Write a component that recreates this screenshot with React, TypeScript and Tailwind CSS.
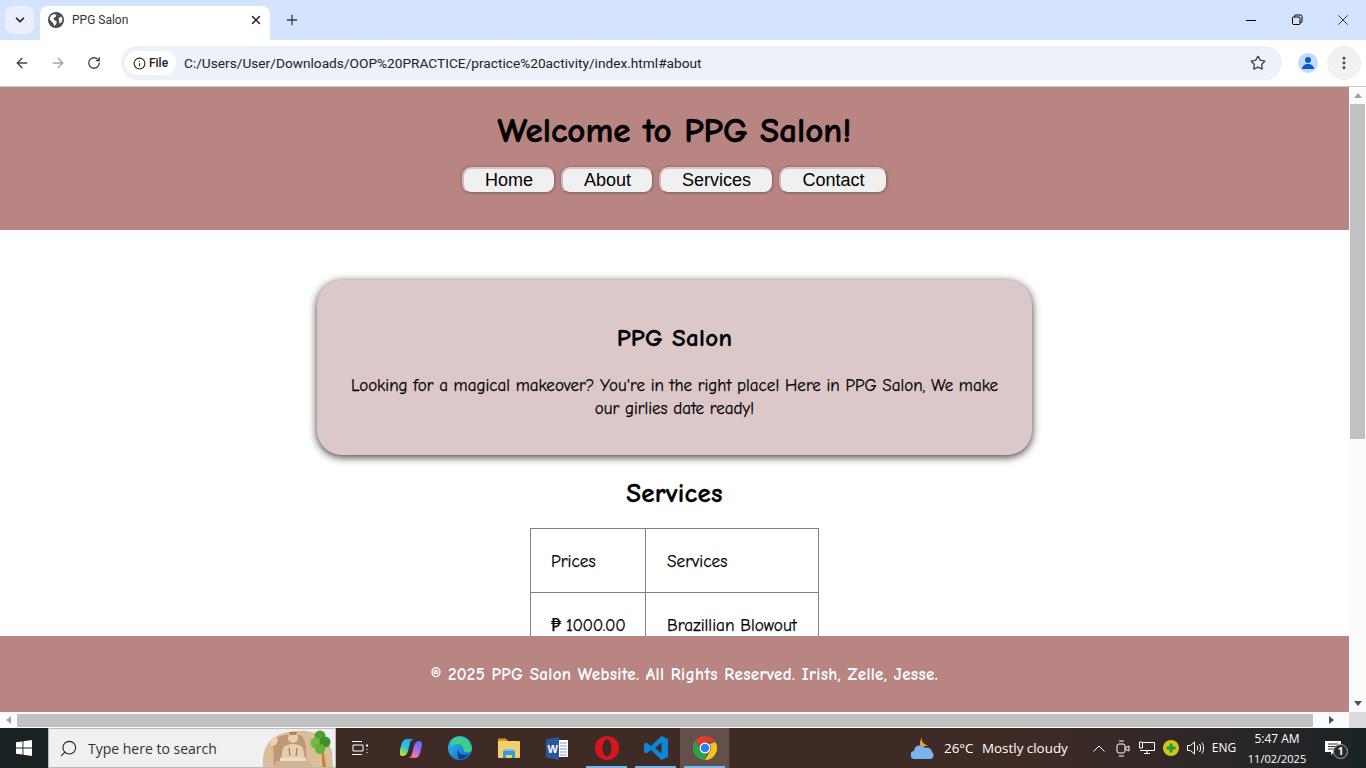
import { ReactNode } from "react";
import { ArrowLeft, ArrowRight, ChevronDown, Info, MoreVertical, Plus, RotateCw, Search, Star, X } from "lucide-react";

const comic = "font-['Comic_Sans_MS','Comic_Neue','Lato',sans-serif]";
const segoe = "font-['Open_Sans',sans-serif]";

function GlobeIcon() {
  return (
    <svg width="16" height="16" viewBox="0 0 16 16">
      <circle cx="8" cy="8" r="8" fill="#474c52" />
      <path d="M3 3.5l3-1.5 2.5 1-1 2-2 1 1 2.5 2 .5v2.5l-2 2.5-1.5-3-2-2-1.5-2zM10.500 6l3-1.500 1 3-1 3-2 1-.5-3z" fill="#fff" />
    </svg>
  );
}

function TabStrip() {
  return (
    <div className="flex h-10 shrink-0 items-end bg-[#d3e3fd] pl-[5px]">
      <div className="mb-[6px] flex h-[28px] w-[29px] items-center justify-center rounded-lg bg-[#e9effb]">
        <ChevronDown size={14} strokeWidth={3} className="text-[#222]" />
      </div>
      <div className="ml-[6px] flex h-[34px] w-[230px] items-center rounded-t-lg bg-white pb-[6px] pl-2 pr-[7px]">
        <GlobeIcon />
        <span className="ml-2 flex-1 font-['Roboto',sans-serif] text-xs text-[#333]">PPG Salon</span>
        <X size={14} strokeWidth={2.5} className="text-[#222]" />
      </div>
      <div className="mb-[12px] ml-[14px] flex items-center">
        <Plus size={16} strokeWidth={2} className="text-[#3c4043]" />
      </div>
      <div className="flex-1" />
      <div className="mb-[11px] flex items-center text-black">
        <div className="flex w-[46px] justify-center">
          <div className="h-px w-[10px] bg-black" />
        </div>
        <div className="flex w-[46px] justify-center">
          <svg width="12" height="12" viewBox="0 0 12 12" fill="none" stroke="#000">
            <rect x="1.500" y="3" width="7.500" height="7.500" rx="1" />
            <path d="M3.500 3V2a1 1 0 011-1h5a1.500 1.500 0 011.500 1.500v5a1 1 0 01-1 1H9" />
          </svg>
        </div>
        <div className="flex w-[46px] justify-center">
          <X size={18} strokeWidth={1} />
        </div>
      </div>
    </div>
  );
}

function Toolbar() {
  return (
    <div className="flex h-[47px] shrink-0 items-center border-b border-[#c9c9c9] bg-white">
      <div className="flex w-[121px] items-center pl-[14px] text-[#444]">
        <ArrowLeft size={16} strokeWidth={2} />
        <ArrowRight size={16} strokeWidth={2} className="ml-5 text-[#a5a5a5]" />
        <RotateCw size={14} strokeWidth={2.2} className="ml-[21px]" />
      </div>
      <div className="flex h-[34px] w-[1161px] items-center rounded-full bg-[#ecf1fa] pl-1 pr-4">
        <div className="flex h-6 w-[51px] items-center justify-center gap-[3px] rounded-full bg-white">
          <Info size={13} strokeWidth={2} className="text-[#222]" />
          <span className="font-['Roboto',sans-serif] text-xs font-medium text-[#222]">File</span>
        </div>
        <span className="ml-2 flex-1 font-['Roboto',sans-serif] text-[13.7px] text-[#222]">
          C:/Users/User/Downloads/OOP%20PRACTICE/practice%20activity/index.html#about
        </span>
        <Star size={16} strokeWidth={2} className="text-[#444]" />
      </div>
      <div className="ml-4 flex h-5 w-5 items-center justify-center overflow-hidden rounded-full bg-[#c2dafb]">
        <svg width="14" height="14" viewBox="0 0 14 14" fill="#0b57d0">
          <circle cx="7" cy="4" r="3" />
          <path d="M1 13c0-3 3-5 6-5s6 2 6 5z" />
        </svg>
      </div>
      <div className="ml-[9px] flex h-[34px] w-[34px] items-center justify-center rounded-full bg-[#f1f1f1]">
        <MoreVertical size={16} strokeWidth={2.4} className="text-[#444]" />
      </div>
    </div>
  );
}

function NavButton({ label, width }: { label: string; width: string }) {
  return (
    <button
      className={`h-[26px] ${width} rounded-[9px] border-t-2 border-r border-b border-l-2 border-t-[#d9c4c4] border-r-[#8d6a6a] border-b-[#8d6a6a] border-l-[#d2b8b8] bg-[#f0f0f0] pb-[2px] font-['Liberation_Sans',sans-serif] text-lg leading-none text-black shadow-[0_0_3px_rgba(90,60,60,0.55)]`}
    >
      {label}
    </button>
  );
}

function Cell({ children, className = "" }: { children: ReactNode; className?: string }) {
  return (
    <td className={`whitespace-nowrap border border-[#808080] pb-[19px] pt-[21px] text-[17.3px] leading-[23px] text-black [-webkit-text-stroke:0.25px_black] ${className}`}>
      {children}
    </td>
  );
}

function Page() {
  return (
    <div className={`flex min-w-0 flex-1 flex-col ${comic}`}>
      <header className="flex h-[143px] shrink-0 flex-col items-center bg-[#b98583] pt-[22px]">
        <h1 className="text-[35px] font-bold leading-[44px] text-black [-webkit-text-stroke:0.5px_black]">Welcome to PPG Salon!</h1>
        <nav className="mt-[14px] flex gap-[6px]">
          <NavButton label="Home" width="w-[93px]" />
          <NavButton label="About" width="w-[92px]" />
          <NavButton label="Services" width="w-[114px]" />
          <NavButton label="Contact" width="w-[108px]" />
        </nav>
      </header>
      <main className="flex min-h-0 flex-1 flex-col items-center overflow-hidden bg-white pt-[50px]">
        <section className="flex h-[175px] w-[715px] shrink-0 flex-col items-center rounded-[25px] bg-[#dcc8c9] px-[30px] pt-[40px] text-center shadow-[0_2px_8px_rgba(0,0,0,0.8)]">
          <h2 className="text-[25px] font-bold leading-9 tracking-[0.3px] text-black [-webkit-text-stroke:0.3px_black]">PPG Salon</h2>
          <p className="mt-[18px] text-[17px] leading-[23px] text-black [-webkit-text-stroke:0.25px_black]">
            Looking for a magical makeover? You're in the right place! Here in PPG Salon, We make our girlies date ready!
          </p>
        </section>
        <h2 className="mt-[21px] text-[27px] font-bold leading-9 tracking-[0.3px] text-black [-webkit-text-stroke:0.3px_black]">Services</h2>
        <table className="mt-4 w-[289px] shrink-0 table-fixed border-collapse">
          <tbody>
            <tr className="h-16">
              <Cell className="w-[115px] pl-5">Prices</Cell>
              <Cell className="pl-[21px]">Services</Cell>
            </tr>
            <tr className="h-16">
              <Cell className="w-[115px] pl-5 tracking-[-0.4px]">₱ 1000.00</Cell>
              <Cell className="pl-[21px]">Brazillian Blowout</Cell>
            </tr>
          </tbody>
        </table>
      </main>
      <footer className="flex h-[76px] shrink-0 items-center justify-center bg-[#b98583] pl-5 pt-[2px]">
        <p className="text-[17px] font-bold tracking-[0.35px] text-white">
          © 2025 PPG Salon Website. All Rights Reserved. Irish, Zelle, Jesse.
        </p>
      </footer>
    </div>
  );
}

function VerticalScrollbar() {
  return (
    <div className="flex w-[17px] shrink-0 flex-col items-center bg-[#fbfbfb]">
      <div className="mt-[6px] h-0 w-0 border-x-[4px] border-b-[5px] border-x-transparent border-b-[#a3a3a3]" />
      <div className="mt-[6px] h-[335px] w-[15px] bg-[#c1c1c1]" />
      <div className="flex-1" />
      <div className="mb-[6px] h-0 w-0 border-x-[4px] border-t-[5px] border-x-transparent border-t-[#505050]" />
    </div>
  );
}

function HorizontalScrollbar() {
  return (
    <div className="flex h-4 shrink-0 items-center bg-[#fbfbfb]">
      <div className="flex w-[17px] justify-center">
        <div className="h-0 w-0 border-y-[4px] border-r-[5px] border-y-transparent border-r-[#a3a3a3]" />
      </div>
      <div className="h-[13px] w-[1296px] bg-[#c1c1c1]" />
      <div className="flex flex-1 justify-center">
        <div className="h-0 w-0 border-y-[4px] border-l-[5px] border-y-transparent border-l-[#505050]" />
      </div>
      <div className="h-4 w-[17px] bg-[#dcdcdc]" />
    </div>
  );
}

function SearchArt() {
  return (
    <svg width="74" height="38" viewBox="0 0 74 38" className="-mr-px">
      <path d="M1 38c-1-10 1-20 8-27C17 4 30 1 44 2c12 1 22 8 26 20l1 16z" fill="#dcbd9a" />
      <path d="M11 14c3-6 8-8 14-8h14c3 3 5 8 5 14l1 18H12z" fill="#bd9872" />
      <path d="M8 13l6-6 2 4-2 5-5 1z" fill="#ecd4b6" />
      <circle cx="31" cy="9" r="5" fill="#e8cfae" />
      <path d="M27 3h8l-1 3h-6z" fill="#a98560" />
      <path d="M21 19c2-3 6-4 10-4s8 1 10 4l2 11H19z" fill="#e6cfae" />
      <path d="M27 19l1 8M35 19l-1 8" stroke="#8c6a4a" strokeWidth="1" />
      <path d="M18 29h26v3H18z" fill="#f0dfc4" />
      <path d="M14 32h34l2 6H12z" fill="#d3b48f" />
      <path d="M59.500 21h2l2.500 17h-3.500z" fill="#c8822c" />
      <circle cx="58" cy="7" r="5.500" fill="#4f9f32" />
      <circle cx="54" cy="14" r="5.500" fill="#6cbc3e" />
      <circle cx="63" cy="13" r="5.500" fill="#3f8f2c" />
      <circle cx="58" cy="20" r="5" fill="#62b23a" />
    </svg>
  );
}

function TaskButton({ children, active, running }: { children: ReactNode; active?: boolean; running?: boolean }) {
  return (
    <div className={`relative flex h-10 w-[49px] items-center justify-center ${active ? "bg-[#645048]" : ""}`}>
      {children}
      {running && <div className="absolute inset-x-1 bottom-0 h-[2px] bg-[#76b9ed]" />}
    </div>
  );
}

function Taskbar() {
  return (
    <div className={`flex h-10 shrink-0 items-center bg-gradient-to-r from-[#3f2b26] from-75% to-[#1b2326] ${segoe}`}>
      <div className="flex h-10 w-12 items-center justify-center bg-[#1b2224]">
        <svg width="16" height="16" viewBox="0 0 16 16" fill="#fff">
          <path d="M0 2.300L6.500 1.400V7.500H0zM7.400 1.300L16 0V7.500H7.400zM0 8.400H6.500V14.600L0 13.700zM7.400 8.400H16V16L7.400 14.800z" />
        </svg>
      </div>
      <div className="flex h-10 w-[288px] items-center overflow-hidden border border-[#b9b9b9] bg-[#f0f0f0] pl-[10px]">
        <Search size={19} strokeWidth={1.4} className="-scale-x-100 text-[#222]" />
        <span className="ml-[10px] flex-1 text-[14px] text-[#333]">Type here to search</span>
        <SearchArt />
      </div>
      <div className="flex h-10 w-[50px] items-center justify-center pr-[2px]">
        <svg width="16" height="16" viewBox="0 0 16 16" fill="none" stroke="#fff">
          <path d="M0 1.500h10M0 14.500h10M1 5h10v6H1z" />
          <path d="M14 4.500h2v2h-2z" fill="#fff" stroke="none" />
          <path d="M14.500 9h1v1h-1zM14.500 12h1v1h-1z" fill="#fff" stroke="none" />
        </svg>
      </div>
      <TaskButton>
        <svg width="22" height="22" viewBox="0 0 22 22">
          <defs>
            <linearGradient id="copA" x1="0.6" y1="0" x2="0" y2="1">
              <stop offset="0" stopColor="#1fa8f5" />
              <stop offset="0.45" stopColor="#28c8d8" />
              <stop offset="0.75" stopColor="#8fdc58" />
              <stop offset="1" stopColor="#f2d43d" />
            </linearGradient>
            <linearGradient id="copB" x1="0.7" y1="0" x2="0.2" y2="1">
              <stop offset="0" stopColor="#5f6cf2" />
              <stop offset="0.5" stopColor="#b56be8" />
              <stop offset="0.8" stopColor="#f07ab0" />
              <stop offset="1" stopColor="#f0553d" />
            </linearGradient>
          </defs>
          <path d="M7 2h8c-3 0-4 1.500-5 4l-2 8c-.8 3-2.500 5-5 5-3 0-4-2-3-6l1.500-6C2.500 4 4.500 2 7 2z" fill="url(#copA)" />
          <path d="M15 21H7c3 0 4-1.500 5-4l2-8c.8-3 2.500-5 5-5 3 0 3.500 2 2.500 6L20 16c-.8 3-2.500 5-5 5z" fill="url(#copB)" />
        </svg>
      </TaskButton>
      <TaskButton>
        <svg width="24" height="24" viewBox="0 0 24 24">
          <defs>
            <linearGradient id="edgeA" x1="0" y1="0" x2="1" y2="1">
              <stop offset="0" stopColor="#35c1f1" />
              <stop offset="1" stopColor="#0b62c4" />
            </linearGradient>
          </defs>
          <circle cx="12" cy="12" r="12" fill="url(#edgeA)" />
          <path d="M6 2.500C12-1.500 23 2 24 13c0 2-2 3.500-4.500 3.500-3 0-4-1.500-4-3 0-3-3-6-7-5.500C6 8 4 9 3 11c0-4 1-6.500 3-8.500z" fill="#3ed08a" />
          <path d="M10 13c0 3 2 5.500 5.500 6 2 .2 4-.4 5.500-1.500-2.500 4-7 6-11 5.500C12 22 8 18 10 13z" fill="#0a3f8f" />
        </svg>
      </TaskButton>
      <TaskButton>
        <svg width="22" height="20" viewBox="0 0 22 20">
          <path d="M0 1.500A1 1 0 011 .5h7l2 2.500H0z" fill="#d49a16" />
          <path d="M0 3h21a1 1 0 011 1v15a1 1 0 01-1 1H1a1 1 0 01-1-1z" fill="#f5d06a" />
          <path d="M5 13h12v7h-3v-3H8v3H5z" fill="#2f9be0" />
          <path d="M7 11h8l2 2H5z" fill="#6fc3f2" />
        </svg>
      </TaskButton>
      <TaskButton>
        <svg width="23" height="23" viewBox="0 0 23 23">
          <path d="M0 2.500L13 0v23L0 20.500z" fill="#2b579a" />
          <path d="M13 3h9v17h-9z" fill="#fff" />
          <path d="M14 6h7M14 9h7M14 12h7M14 15h7M14 18h7" stroke="#7f9bcb" strokeWidth="1.200" />
          <text x="1.500" y="16" fontSize="11" fontWeight="700" fill="#fff" fontFamily="Liberation Sans, sans-serif">
            W
          </text>
        </svg>
      </TaskButton>
      <TaskButton running>
        <svg width="24" height="24" viewBox="0 0 24 24">
          <circle cx="12" cy="12" r="12" fill="#d9141c" />
          <ellipse cx="12" cy="12" rx="4.500" ry="8.500" fill="#3b2b27" />
        </svg>
      </TaskButton>
      <TaskButton running>
        <svg width="24" height="24" viewBox="0 0 24 24">
          <path d="M17.500 0L24 3v18l-6.500 3L7 14l-4.500 3.500L0 16V8l2.500-1.500L7 10zM17.500 6.500L11 12l6.500 5.500z" fill="#0e86d6" />
        </svg>
      </TaskButton>
      <TaskButton active running>
        <svg width="24" height="24" viewBox="0 0 24 24">
          <path d="M12 0a12 12 0 0110.400 6H12a6 6 0 00-5.700 4L2.300 4.600A12 12 0 0112 0z" fill="#e33b2e" />
          <path d="M22.400 6A12 12 0 0112 24l5.200-9a6 6 0 00-.6-7z" fill="#f7c51c" />
          <path d="M12 24A12 12 0 012.300 4.600L7.500 15a6 6 0 006 2.800z" fill="#2ba245" />
          <circle cx="12" cy="12" r="5.500" fill="#fff" />
          <circle cx="12" cy="12" r="4.300" fill="#2f7cf0" />
        </svg>
      </TaskButton>
      <div className="flex-1" />
      <svg width="25" height="24" viewBox="0 0 25 24" className="mr-2">
        <path d="M11 1a6 6 0 006 8 7 7 0 01-8 0c0-3 .5-6 2-8z" fill="#f6a623" />
        <path d="M4 23a4 4 0 01-1-8 6 6 0 0111-3 5 5 0 017 4 4 4 0 01-1 7z" fill="#79b4ee" />
      </svg>
      <span className="w-[38px] text-[13.4px] text-white">26°C</span>
      <span className="w-[104px] text-[13.4px] text-white">Mostly cloudy</span>
      <div className="flex w-[25px] justify-center">
        <svg width="12" height="7" viewBox="0 0 12 7" fill="none" stroke="#fff">
          <path d="M0.500 6.500L6 1l5.500 5.500" />
        </svg>
      </div>
      <div className="flex w-[24px] justify-center">
        <svg width="14" height="17" viewBox="0 0 14 17" fill="none" stroke="#fff">
          <rect x="1" y="4" width="8" height="9" rx="2" />
          <path d="M9 8l4-2v5l-4-2M3 1h5M3 16h5" />
        </svg>
      </div>
      <div className="flex w-[24px] justify-center">
        <svg width="16" height="14" viewBox="0 0 16 14" fill="none" stroke="#fff">
          <path d="M4 1.500h11.500v8H1M8 9.500v3M5 12.500h6M.5 1v6h3V1z" />
        </svg>
      </div>
      <div className="flex w-[24px] justify-center">
        <svg width="16" height="16" viewBox="0 0 16 16">
          <circle cx="8" cy="8" r="8" fill="#d9c31b" />
          <path d="M6.500 3.500h3v3h3v3h-3v3h-3v-3h-3v-3h3z" fill="#1f9c3a" />
        </svg>
      </div>
      <div className="flex w-[24px] justify-center">
        <svg width="17" height="14" viewBox="0 0 17 14" fill="none" stroke="#fff">
          <path d="M.500 4.500h3l4-3.500v12l-4-3.500h-3zM10 4.500c1 1.500 1 3.500 0 5M12.500 3c1.500 2.500 1.500 5.500 0 8M15 1.500c2 3 2 8 0 11" />
        </svg>
      </div>
      <span className="w-[34px] text-center text-[12px] text-white">ENG</span>
      <div className="flex w-[72px] flex-col items-center pt-px leading-5 text-white">
        <span className="text-[12px]">5:47 AM</span>
        <span className="text-[11px]">11/02/2025</span>
      </div>
      <div className="relative ml-[2px] mr-[15px] flex w-[36px] justify-center">
        <svg width="16" height="14" viewBox="0 0 16 14" fill="#fff">
          <path d="M0 0h16v11H9l-3 3v-3H0z" />
          <path d="M3 3h10M3 5.500h10M3 8h7" stroke="#333" />
        </svg>
        <span className="absolute -bottom-[4px] right-[3px] flex h-[15px] w-[15px] items-center justify-center rounded-full border border-[#aaa] bg-[#2c2827] text-[10px] font-bold text-white">
          1
        </span>
      </div>
    </div>
  );
}

export default function App() {
  return (
    <div className="flex h-screen w-full flex-col overflow-hidden bg-white">
      <TabStrip />
      <Toolbar />
      <div className="flex min-h-0 flex-1">
        <Page />
        <VerticalScrollbar />
      </div>
      <HorizontalScrollbar />
      <Taskbar />
    </div>
  );
}
